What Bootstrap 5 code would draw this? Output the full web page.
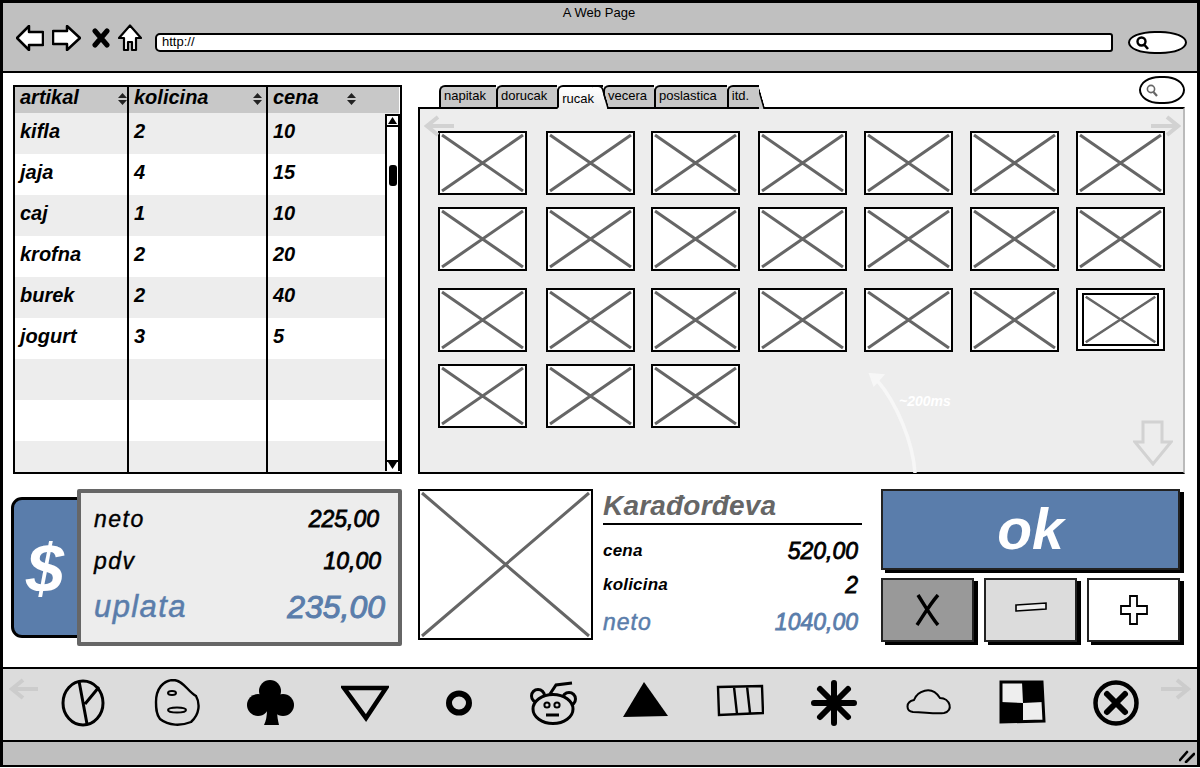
<!DOCTYPE html>
<html lang="sr">
<head>
<meta charset="utf-8">
<title>A Web Page</title>
<link href="https://cdn.jsdelivr.net/npm/bootstrap@5.3.0/dist/css/bootstrap.min.css" rel="stylesheet">
<style>
:root{--ink:#000;--blue:#5a7dab;--pale:#ededed;--slate:#666;}
html,body{margin:0;background:#fff;}
body{font-family:"Liberation Sans",Arial,sans-serif;color:#000;width:1200px;height:768px;overflow:hidden;}
.frame{width:1200px;height:767px;border:solid var(--ink);border-width:3px 3px 2px;}
.chrome{height:70px;flex:none;background:#c0c0c0;border-bottom:2px solid var(--ink);}
.page-title{font-size:13px;line-height:15px;padding-top:2px;padding-right:2px;letter-spacing:.05px;}
.toolbar{padding:4px 10px 0 13px;}
.nav-icons{margin-bottom:9px;}
.nav-stop{margin-left:11px;}
.nav-home{margin-left:8px;}
.addr{width:959px;height:19px;margin-left:13px;background:#fff;border:2.5px solid var(--ink);border-radius:5px 3px 3px 5px;font-size:13px;line-height:14px;padding-left:5px;}
.pill{background:#fff;border:2.5px solid var(--ink);border-radius:45%/50%;}
.pill-top{width:59px;height:23px;margin-left:15px;padding-left:6px;}
.pill-small{width:46px;height:28px;padding-left:5px;border-width:2px;margin-bottom:3px;}
.workspace{padding:4px 12px 0 10px;}
.upper{height:397px;gap:16px;}
.ledger{width:389px;height:389px;margin-top:8px;border:2.5px solid var(--ink);overflow:hidden;}
.ledger .table{table-layout:fixed;width:384px;margin:0;--bs-table-bg:transparent;--bs-table-color:#000;color:#000;}
.ledger th,.ledger td{padding:0 0 6px 5px;border:0;font-weight:bold;font-style:italic;font-size:20px;vertical-align:middle;box-shadow:none;line-height:22px;color:#000;}
.ledger th{height:26px;background:#c8c8c8;font-size:20px;line-height:20px;}
.ledger th>span{height:20px;}
.ledger td{height:41px;}
.ledger tbody tr:nth-child(odd) td{background:var(--pale);}
.ledger th+th,.ledger td+td{border-left:2px solid var(--ink);}
.ledger tr.cut td{height:31px;}
.sort-mark{width:9px;height:12px;margin-top:4px;}
.sort-cena{margin-left:28px;}
.scroll-rail{position:absolute;right:0;top:27px;bottom:1px;width:15px;background:#fff;border-left:2px solid var(--ink);border-right:2px solid var(--ink);border-top:2px solid var(--ink);}
.rail-end{height:11px;}
.rail-end.up{border-bottom:2px solid var(--ink);}
.rail-end.down{border-top:2px solid var(--ink);position:absolute;left:0;right:0;bottom:0;}
.rail-thumb{position:absolute;left:2px;top:49px;width:8px;height:21px;background:#000;border-radius:3px;}
.catalog{width:767px;}
.tabs-line{height:30px;}
.tab-strip{padding-left:21px;margin-bottom:-2px;position:relative;z-index:1;}
.tab-item{position:relative;height:24px;font-size:13px;line-height:18px;padding:0 10px 0 3px;background:#c8c8c8;border:solid var(--ink);border-width:2px 0 2px 2px;border-radius:6px 0 0 0;}
.tab-item::after{content:"";position:absolute;top:-2px;right:-3px;bottom:-2px;width:11px;background:inherit;border-right:2px solid var(--ink);border-top:2px solid var(--ink);transform:skewX(16deg);border-radius:0 5px 0 0;z-index:-1;}
.tab-item.on{background:linear-gradient(#fff,var(--pale));border-bottom-color:var(--pale);padding:3px 9px 0 3px;z-index:2;}
.tab-item.tight{padding-right:7px;}
.shelf{height:367px;background:var(--pale);border:solid var(--ink);border-width:2.5px 2px 2px 2.5px;border-right-color:#bbb;padding:22px 0 0 18px;}
.thumbs{display:grid;grid-template-columns:108px 105px 107px 106px 106px 106px 89px;grid-template-rows:76px 81px 76px 64px;}
.thumb{width:89px;height:64px;background:#fff;border:2.5px solid var(--ink);display:block;}
.thumb-on{width:89px;height:63px;background:#fff;border:2.5px solid var(--ink);padding:3px 4px;}
.thumb-on .thumb{width:100%;height:100%;border-width:2.5px;}
.over-left{position:absolute;left:4px;top:6px;}
.over-right{position:absolute;right:2px;top:6px;}
.over-down{position:absolute;right:10px;bottom:6px;}
.over-curve{position:absolute;left:440px;top:260px;}
.over-note{position:absolute;left:479px;top:284px;color:#fff;font-size:14px;font-weight:bold;font-style:italic;line-height:16px;}
.lower{margin-top:15px;height:160px;}
.summary{width:391px;margin-left:-2px;}
.dollar-box{width:78px;height:141px;margin-top:8px;background:var(--blue);border:3px solid var(--ink);border-radius:11px;color:#fff;font:italic bold 68px/1 "Liberation Sans",sans-serif;padding:0 0 0 12px;}
.totals{width:325px;height:157px;margin-left:-12px;position:relative;z-index:1;background:var(--pale);border:4px solid var(--slate);border-radius:2px;padding:5px 17px 0 13px;font-style:italic;}
.totals-row{font-size:23px;height:42px;line-height:42px;letter-spacing:1.5px;-webkit-text-stroke:.4px #000;}
.totals-row b{font-size:23px;letter-spacing:0;font-weight:normal;-webkit-text-stroke:.8px #000;}
.totals-row.first{margin-right:2px;}
.totals-row.last{font-size:31px;height:50px;line-height:50px;color:var(--blue);margin-right:-4px;letter-spacing:1.4px;-webkit-text-stroke:.5px var(--blue);}
.totals-row.last b{font-size:32px;-webkit-text-stroke:1px var(--blue);}
.picture{width:175px;height:151px;margin-left:16px;background:#fff;border:2.5px solid var(--ink);display:block;}
.facts{width:259px;margin-left:10px;}
.facts-title{font:italic bold 28px/30px "Liberation Sans",sans-serif;letter-spacing:.2px;color:var(--slate);padding-top:2px;height:36px;border-bottom:2px solid var(--ink);margin:0;}
.facts-row{height:34px;line-height:34px;font-style:italic;font-weight:bold;font-size:17px;letter-spacing:.2px;padding-right:4px;}
.facts-row b{font-size:23px;letter-spacing:0;font-weight:normal;-webkit-text-stroke:.8px #000;}
.facts-row.first{margin-top:9px;}
.facts-row.last{font-size:23px;font-weight:normal;height:40px;line-height:40px;color:var(--blue);letter-spacing:1px;-webkit-text-stroke:.5px var(--blue);}
.facts-row.last b{font-size:23px;-webkit-text-stroke:.8px var(--blue);}
.actions{width:299px;margin-left:19px;}
.actions .btn{border:2px solid #222;border-radius:0;box-shadow:4px 3px 0 #000;padding:0;}
.btn-ok{height:81px;background:var(--blue);color:#fff;font:italic bold 57px/1 "Liberation Sans",sans-serif;}
.action-row{margin-top:8px;gap:10px;}
.action-row .btn{height:64px;flex:1 1 0;}
.btn-x{background:#999;}.btn-minus{background:#dcdcdc;}.btn-plus{background:#fff;}
.glyph-minus{margin-bottom:8px;}
.dock{height:75px;flex:none;background:#dcdcdc;border-top:2px solid var(--ink);border-bottom:2px solid var(--ink);padding:0 2px 0 6px;position:relative;}
.dock-side{position:absolute;top:8px;}
.dock-side.l{left:6px;}.dock-side.r{right:5px;}
.dock-items{padding:10px 55px 0 50px;}
.status{flex:none;height:23px;background:#bfbfbf;position:relative;}
.grip{position:absolute;right:2px;bottom:2px;}
</style>
</head>
<body>
<svg width="0" height="0" class="position-absolute">
<defs>
<symbol id="x-thumb" viewBox="0 0 84 59" preserveAspectRatio="none">
<path d="M2 2 82 57M82 2 2 57" stroke="#666" stroke-width="3" fill="none"/>
</symbol>
<symbol id="sort" viewBox="0 0 9 12"><path d="M4.5 0 9 5H0ZM4.5 12 0 7H9Z" fill="#222"/></symbol>
</defs>
</svg>
<div class="frame d-flex flex-column">
<header class="chrome">
  <div class="page-title text-center">A Web Page</div>
  <div class="toolbar d-flex align-items-center">
    <div class="nav-icons d-flex align-items-center">
      <svg width="28" height="26" viewBox="0 0 28 26"><path d="M1 13 13 1V7H27V20H13V25Z" fill="#fff" stroke="#000" stroke-width="2.5" stroke-linejoin="round"/></svg>
      <svg class="ms-2" width="29" height="26" viewBox="0 0 29 26"><path d="M28 13 15 1V6H1V19H15V25Z" fill="#fff" stroke="#000" stroke-width="2.5" stroke-linejoin="round"/></svg>
      <svg class="nav-stop" width="18" height="20" viewBox="0 0 18 20"><path d="M3 3 15 17M15 3 3 17" stroke="#000" stroke-width="5" stroke-linecap="round"/></svg>
      <svg class="nav-home" width="24" height="28" viewBox="0 0 24 28"><path d="M12 1.5 23 14H18V26H14V18H10V26H6V14H1Z" fill="#fff" stroke="#000" stroke-width="2.2" stroke-linejoin="round"/></svg>
    </div>
    <div class="addr">http://</div>
    <div class="pill pill-top d-flex align-items-center">
      <svg width="13" height="14" viewBox="0 0 13 14"><circle cx="5.5" cy="5.5" r="4" fill="none" stroke="#000" stroke-width="2.4"/><path d="M8.5 9 12 13" stroke="#000" stroke-width="2.6"/></svg>
    </div>
  </div>
</header>

<main class="workspace flex-grow-1">
  <div class="upper d-flex">
    <section class="ledger position-relative">
      <table class="table">
        <colgroup><col style="width:113px"><col style="width:139px"><col></colgroup>
        <thead><tr>
          <th><span class="d-flex align-items-center justify-content-between">artikal<svg class="sort-mark"><use href="#sort"/></svg></span></th>
          <th><span class="d-flex align-items-center justify-content-between pe-1">kolicina<svg class="sort-mark"><use href="#sort"/></svg></span></th>
          <th><span class="d-flex align-items-center">cena<svg class="sort-mark sort-cena"><use href="#sort"/></svg></span></th>
        </tr></thead>
        <tbody>
          <tr><td>kifla</td><td>2</td><td>10</td></tr>
          <tr><td>jaja</td><td>4</td><td>15</td></tr>
          <tr><td>caj</td><td>1</td><td>10</td></tr>
          <tr><td>krofna</td><td>2</td><td>20</td></tr>
          <tr><td>burek</td><td>2</td><td>40</td></tr>
          <tr><td>jogurt</td><td>3</td><td>5</td></tr>
          <tr><td></td><td></td><td></td></tr>
          <tr><td></td><td></td><td></td></tr>
          <tr class="cut"><td></td><td></td><td></td></tr>
        </tbody>
      </table>
      <div class="scroll-rail">
        <div class="rail-end up d-flex justify-content-center"><svg width="9" height="8" viewBox="0 0 9 8"><path d="M4.5 1 9 8H0Z"/></svg></div>
        <div class="rail-thumb"></div>
        <div class="rail-end down d-flex justify-content-center"><svg width="9" height="8" viewBox="0 0 9 8"><path d="M4.5 7 9 0H0Z"/></svg></div>
      </div>
    </section>

    <section class="catalog">
      <div class="tabs-line d-flex justify-content-between align-items-end">
        <ul class="tab-strip nav">
          <li class="tab-item">napitak</li>
          <li class="tab-item">dorucak</li>
          <li class="tab-item on">rucak</li>
          <li class="tab-item tight">vecera</li>
          <li class="tab-item">poslastica</li>
          <li class="tab-item">itd.</li>
        </ul>
        <div class="pill pill-small d-flex align-items-center">
          <svg width="12" height="13" viewBox="0 0 12 13"><circle cx="5" cy="5" r="3.6" fill="none" stroke="#666" stroke-width="1.6"/><path d="M7.5 8 11 12" stroke="#666" stroke-width="2.2"/></svg>
        </div>
      </div>
      <div class="shelf position-relative">
        <div class="thumbs">
          <svg class="thumb"><use href="#x-thumb"/></svg><svg class="thumb"><use href="#x-thumb"/></svg><svg class="thumb"><use href="#x-thumb"/></svg><svg class="thumb"><use href="#x-thumb"/></svg><svg class="thumb"><use href="#x-thumb"/></svg><svg class="thumb"><use href="#x-thumb"/></svg><svg class="thumb"><use href="#x-thumb"/></svg>
          <svg class="thumb"><use href="#x-thumb"/></svg><svg class="thumb"><use href="#x-thumb"/></svg><svg class="thumb"><use href="#x-thumb"/></svg><svg class="thumb"><use href="#x-thumb"/></svg><svg class="thumb"><use href="#x-thumb"/></svg><svg class="thumb"><use href="#x-thumb"/></svg><svg class="thumb"><use href="#x-thumb"/></svg>
          <svg class="thumb"><use href="#x-thumb"/></svg><svg class="thumb"><use href="#x-thumb"/></svg><svg class="thumb"><use href="#x-thumb"/></svg><svg class="thumb"><use href="#x-thumb"/></svg><svg class="thumb"><use href="#x-thumb"/></svg><svg class="thumb"><use href="#x-thumb"/></svg>
          <div class="thumb-on"><svg class="thumb"><use href="#x-thumb"/></svg></div>
          <svg class="thumb"><use href="#x-thumb"/></svg><svg class="thumb"><use href="#x-thumb"/></svg><svg class="thumb"><use href="#x-thumb"/></svg>
        </div>
        <svg class="over-left" width="32" height="22" viewBox="0 0 32 22"><path d="M30 11H3M14 2 3 11 14 20" fill="none" stroke="#d2d2d2" stroke-width="4"/></svg>
        <svg class="over-right" width="32" height="22" viewBox="0 0 32 22"><path d="M2 11H29M18 2 29 11 18 20" fill="none" stroke="#d2d2d2" stroke-width="4"/></svg>
        <svg class="over-down" width="40" height="46" viewBox="0 0 40 46"><path d="M10 2H29V22H38L20 44 2 22H10Z" fill="none" stroke="#d2d2d2" stroke-width="3"/></svg>
        <svg class="over-curve" width="60" height="104" viewBox="0 0 60 104"><path d="M55 104C53 75 38 35 16 10" fill="none" stroke="#f7f7f7" stroke-width="3.5"/><path d="M10 5 23 6 14 16Z" fill="#f7f7f7" stroke="#f7f7f7" stroke-width="2"/></svg>
        <div class="over-note">~200ms</div>
      </div>
    </section>
  </div>

  <div class="lower d-flex">
    <section class="summary d-flex">
      <div class="dollar-box d-flex align-items-center">$</div>
      <div class="totals">
        <div class="totals-row first d-flex justify-content-between"><span>neto</span><b>225,00</b></div>
        <div class="totals-row d-flex justify-content-between"><span>pdv</span><b>10,00</b></div>
        <div class="totals-row last d-flex justify-content-between"><span>uplata</span><b>235,00</b></div>
      </div>
    </section>
    <svg class="picture" viewBox="0 0 170 146" preserveAspectRatio="none"><path d="M2 2 168 144M168 2 2 144" stroke="#666" stroke-width="3" fill="none"/></svg>
    <section class="facts">
      <h2 class="facts-title">Karađorđeva</h2>
      <div class="facts-row first d-flex justify-content-between align-items-center"><span>cena</span><b>520,00</b></div>
      <div class="facts-row d-flex justify-content-between align-items-center"><span>kolicina</span><b>2</b></div>
      <div class="facts-row last d-flex justify-content-between align-items-center"><span>neto</span><b>1040,00</b></div>
    </section>
    <section class="actions">
      <button type="button" class="btn btn-ok w-100">ok</button>
      <div class="action-row d-flex">
        <button type="button" class="btn btn-x" aria-label="X"><svg width="26" height="32" viewBox="0 0 26 32"><path d="M3 1C10 12 17 24 23 31M23 1C15 10 8 22 2 31" fill="none" stroke="#000" stroke-width="3.5"/></svg></button>
        <button type="button" class="btn btn-minus" aria-label="minus"><svg class="glyph-minus" width="32" height="10" viewBox="0 0 32 10"><path d="M1 3 31 1V7L1 9Z" fill="#eee" stroke="#000" stroke-width="1.6"/></svg></button>
        <button type="button" class="btn btn-plus" aria-label="plus"><svg width="28" height="30" viewBox="0 0 28 30"><path d="M10 1H17V11H27V19H17V29H10V19H1V11H10Z" fill="#fff" stroke="#000" stroke-width="1.8"/></svg></button>
      </div>
    </section>
  </div>
</main>

<footer class="dock">
  <svg class="dock-side l" width="30" height="24" viewBox="0 0 30 24"><path d="M29 12H3M14 3 3 12 14 21" fill="none" stroke="#ccc" stroke-width="4"/></svg>
  <svg class="dock-side r" width="32" height="24" viewBox="0 0 32 24"><path d="M1 12H28M17 3 28 12 17 21" fill="none" stroke="#ccc" stroke-width="4"/></svg>
  <div class="dock-items d-flex justify-content-between">
    <svg width="48" height="48" viewBox="0 0 48 48"><g fill="none" stroke="#000" stroke-width="3"><ellipse cx="24" cy="24" rx="20" ry="22"/><path d="M20 2 28 45M26 25 40 8"/></g></svg>
    <svg width="48" height="48" viewBox="0 0 48 48"><path d="M3 23C3 10 10 1 21 1 31 2 34 12 43 17 47 24 47 35 38 43 28 47 16 47 7 40 3 35 3 29 3 23Z" fill="none" stroke="#000" stroke-width="2.4"/><ellipse cx="19" cy="14" rx="4" ry="2" fill="none" stroke="#000" stroke-width="2"/><ellipse cx="24" cy="31" rx="9" ry="2.6" fill="none" stroke="#000" stroke-width="2"/></svg>
    <svg width="48" height="48" viewBox="0 0 48 48"><circle cx="23" cy="12" r="11"/><circle cx="11" cy="26" r="11"/><circle cx="36" cy="26" r="11"/><path d="M17 18H30V30C30 37 31 42 32 46H17C19 42 20 37 20 30Z"/></svg>
    <svg width="48" height="48" viewBox="0 0 48 48"><path d="M3 9H45L25 39Z" fill="none" stroke="#000" stroke-width="4.5" stroke-linejoin="miter"/></svg>
    <svg width="48" height="48" viewBox="0 0 48 48"><ellipse cx="24" cy="24" rx="10" ry="9.5" fill="none" stroke="#000" stroke-width="6"/></svg>
    <svg width="48" height="48" viewBox="0 0 48 48"><g fill="#dcdcdc" stroke="#000" stroke-width="3"><circle cx="9" cy="17" r="6.5"/><circle cx="40" cy="20" r="6.5"/><ellipse cx="24" cy="30" rx="20" ry="14.5"/><path d="M21 15 27 6 43 4" fill="none"/><circle cx="18" cy="26" r="2.6" stroke-width="2"/><circle cx="28" cy="26" r="2.6" stroke-width="2"/><path d="M17 36H30"/></g></svg>
    <svg width="48" height="48" viewBox="0 0 48 48"><path d="M22 3 46 37 1 38Z"/></svg>
    <svg width="48" height="48" viewBox="0 0 48 48"><path d="M2 8 46 7 47 34 3 36ZM18 8 21 35M31 7 34 34" fill="none" stroke="#000" stroke-width="2.4"/></svg>
    <svg width="48" height="48" viewBox="0 0 48 48"><path d="M24 4V44M10 10 38 38M38 10 10 38M4 24H44" stroke="#000" stroke-width="6" stroke-linecap="round"/></svg>
    <svg width="48" height="48" viewBox="0 0 48 48"><path d="M9 33C2 32 1 23 10 21 13 13 27 5 36 19 46 19 50 32 40 34 30 35 20 33 9 33Z" fill="none" stroke="#000" stroke-width="2"/></svg>
    <svg width="48" height="48" viewBox="0 0 48 48"><path d="M3 3 44 3 46 42 3 43Z" fill="#eee" stroke="#000" stroke-width="3"/><path d="M24 3H44L45 23 25 24ZM3 23 25 24V43H3Z"/></svg>
    <svg width="48" height="48" viewBox="0 0 48 48"><circle cx="24" cy="24" r="20.5" fill="none" stroke="#000" stroke-width="4.5"/><path d="M15 15 33 33M33 15 15 33" stroke="#000" stroke-width="6" stroke-linecap="round"/></svg>
  </div>
</footer>
<div class="status">
  <svg class="grip" width="16" height="14" viewBox="0 0 16 14"><path d="M1 11 8 3M7 13 15 5" stroke="#000" stroke-width="2.6" stroke-linecap="round"/></svg>
</div>
</div>
</body>
</html>
